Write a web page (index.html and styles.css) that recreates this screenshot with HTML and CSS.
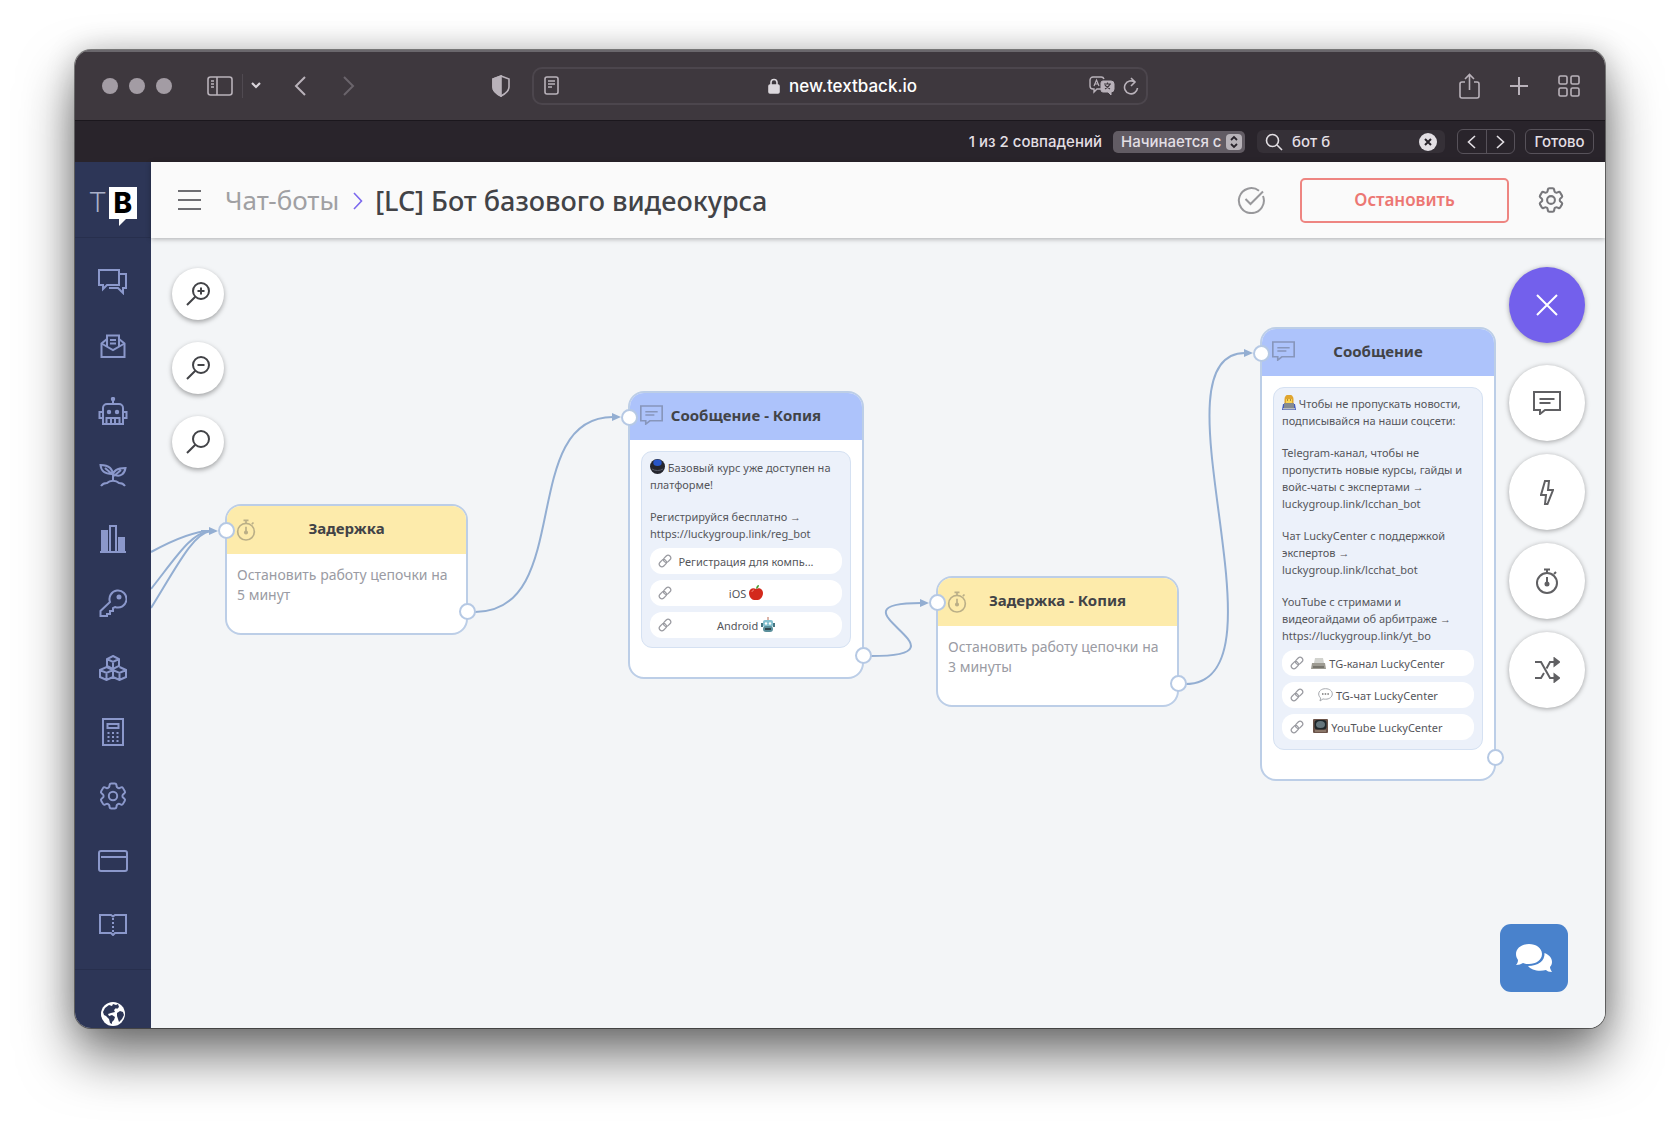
FILE: index.html
```html
<!DOCTYPE html>
<html lang="ru">
<head>
<meta charset="utf-8">
<meta name="viewport" content="width=device-width, initial-scale=1">
<title>[LC] Бот базового видеокурса</title>
<link rel="stylesheet" href="styles.css">
</head>
<body>
<svg class="sprite" aria-hidden="true">
  <symbol id="i-gear" viewBox="2 2 20 20"><path d="M9.594 3.94c.09-.542.56-.94 1.11-.94h2.593c.55 0 1.02.398 1.11.94l.213 1.281c.063.374.313.686.645.87.074.04.147.083.22.127.325.196.72.257 1.075.124l1.217-.456a1.125 1.125 0 0 1 1.37.49l1.296 2.247a1.125 1.125 0 0 1-.26 1.431l-1.003.827c-.293.241-.438.613-.43.992a7.723 7.723 0 0 1 0 .255c-.008.378.137.75.43.991l1.004.827c.424.35.534.955.26 1.43l-1.298 2.247a1.125 1.125 0 0 1-1.369.491l-1.217-.456c-.355-.133-.75-.072-1.076.124a6.47 6.47 0 0 1-.22.128c-.331.183-.581.495-.644.869l-.213 1.281c-.09.543-.56.94-1.11.94h-2.594c-.55 0-1.019-.398-1.11-.94l-.213-1.281c-.062-.374-.312-.686-.644-.87a6.52 6.52 0 0 1-.22-.127c-.325-.196-.72-.257-1.076-.124l-1.217.456a1.125 1.125 0 0 1-1.369-.49l-1.297-2.247a1.125 1.125 0 0 1 .26-1.431l1.004-.827c.292-.24.437-.613.43-.991a6.932 6.932 0 0 1 0-.255c.007-.38-.138-.751-.43-.992l-1.004-.827a1.125 1.125 0 0 1-.26-1.43l1.297-2.247a1.125 1.125 0 0 1 1.37-.491l1.216.456c.356.133.751.072 1.076-.124.072-.044.146-.086.22-.128.332-.183.582-.495.644-.869l.214-1.28Z"/><circle cx="12" cy="12" r="3"/></symbol>
  <symbol id="i-message" viewBox="0 0 28 24"><path d="M1 1h26v18H12l-5 4v-4H1z"/><path d="M6.500 8h15M6.500 12h11"/></symbol>
  <symbol id="i-timer" viewBox="0 0 24 26"><circle cx="12" cy="15" r="10"/><path d="M9 1.500h6M12 1.500V5M19 6l2-2M12 9v6"/><circle class="fill" cx="12" cy="16" r="1.500"/></symbol>
  <symbol id="i-link" viewBox="0 0 16 16"><g transform="rotate(-45 8 8)"><rect x="0" y="5" width="9" height="6" rx="3"/><rect x="7" y="5" width="9" height="6" rx="3"/></g></symbol>
</svg>

<main class="window">
  <div class="toolbar">
    <div class="toolbar-side">
      <div class="lights"><i></i><i></i><i></i></div>
      <button class="plain sidebar-toggle" aria-label="Боковая панель"><svg width="26" height="20" viewBox="0 0 26 20"><rect x="1" y="1" width="24" height="18" rx="2.500"/><path d="M10 1v18M4 5h3M4 8h3M4 11h3"/></svg></button>
      <button class="plain groups" aria-label="Группы вкладок"><svg width="10" height="7" viewBox="0 0 10 7"><path stroke-width="2.200" d="M1 1l4 4 4-4"/></svg></button>
      <button class="plain back" aria-label="Назад"><svg width="12" height="20" viewBox="0 0 12 20"><path stroke-width="2" d="M11 1L2 10l9 9"/></svg></button>
      <button class="plain forward" aria-label="Вперёд" disabled><svg width="12" height="20" viewBox="0 0 12 20"><path stroke-width="2" d="M1 1l9 9-9 9"/></svg></button>
      <button class="plain shield" aria-label="Отчёт о конфиденциальности"><svg width="20" height="22" viewBox="0 0 20 22"><path d="M10 1l8 3v8c0 4-4 7-8 9-4-2-8-5-8-9V4z"/><path class="fill" d="M10 1v20c-4-2-8-5-8-9V4z"/></svg></button>
    </div>
    <div class="address">
      <svg width="15" height="19" viewBox="0 0 15 19"><rect x="1" y="1" width="13" height="17" rx="2"/><path d="M4 5h7M4 8h7M4 11h4" stroke-width="1.300"/></svg>
      <label class="address-field">
        <svg width="12" height="16" viewBox="0 0 12 16" aria-hidden="true"><path d="M3 8V4.500a3 3 0 0 1 6 0V8"/><rect class="fill" x="1" y="7" width="10" height="8" rx="1"/></svg>
        <input type="text" value="new.textback.io" aria-label="Адрес">
      </label>
      <button class="plain" aria-label="Перевести"><svg width="26" height="20" viewBox="0 0 26 20"><path d="M12 13H8l-3 3v-3H4a3 3 0 0 1-3-3V4a3 3 0 0 1 3-3h8a3 3 0 0 1 3 2" stroke-width="1.400"/><path d="M5 10l2.500-6L10 10M6 8h3" stroke-width="1.200"/><path class="fill" d="M14 5h8a3 3 0 0 1 3 3v5a3 3 0 0 1-3 3v3l-3-3h-5a2 2 0 0 1-2-2V7a2 2 0 0 1 2-2z" stroke-width="1"/><path class="cut" d="M15 8h7M18.500 6.500V8M21 8c-1 3-3 4-5 5M16 9c1 2 3 3 5 4"/></svg></button>
      <button class="plain reload" aria-label="Обновить"><svg width="16" height="18" viewBox="0 0 16 18"><path d="M12 5.200A6.500 6.500 0 1 0 14.500 11M8 1l4 4-4 4"/></svg></button>
    </div>
    <div class="toolbar-side toolbar-end">
      <button class="plain" aria-label="Поделиться"><svg width="21" height="26" viewBox="0 0 21 26"><path d="M6 9H3a2 2 0 0 0-2 2v12a2 2 0 0 0 2 2h15a2 2 0 0 0 2-2V11a2 2 0 0 0-2-2h-3M10.500 17V2M6 6l4.500-4.500L15 6"/></svg></button>
      <button class="plain" aria-label="Новая вкладка"><svg width="20" height="20" viewBox="0 0 20 20"><path stroke-width="2" d="M10 1v18M1 10h18"/></svg></button>
      <button class="plain" aria-label="Обзор вкладок"><svg width="22" height="22" viewBox="0 0 22 22"><rect x="1" y="1" width="8" height="8" rx="1.500"/><rect x="13" y="1" width="8" height="8" rx="1.500"/><rect x="1" y="13" width="8" height="8" rx="1.500"/><rect x="13" y="13" width="8" height="8" rx="1.500"/></svg></button>
    </div>
  </div>

  <div class="findbar">
    <span>1 из 2 совпадений</span>
    <label class="match-mode">
      <select aria-label="Режим поиска"><option>Начинается с</option></select>
      <svg width="16" height="16" viewBox="0 0 16 16" aria-hidden="true"><rect width="16" height="16" rx="4"/><path d="M5 6l3-3 3 3M5 10l3 3 3-3"/></svg>
    </label>
    <label class="find-field">
      <svg width="18" height="18" viewBox="0 0 18 18" aria-hidden="true"><circle cx="7.500" cy="7.500" r="6"/><path d="M12 12l5 5"/></svg>
      <input type="text" value="бот б" aria-label="Найти на странице">
      <button class="plain clear" aria-label="Очистить"><svg width="18" height="18" viewBox="0 0 18 18"><circle cx="9" cy="9" r="9"/><path d="M6 6l6 6M12 6l-6 6"/></svg></button>
    </label>
    <div class="stepper">
      <button aria-label="Предыдущее"><svg width="9" height="14" viewBox="0 0 9 14"><path d="M8 1L1.500 7 8 13"/></svg></button>
      <button aria-label="Следующее"><svg width="9" height="14" viewBox="0 0 9 14"><path d="M1 1l6.500 6L1 13"/></svg></button>
    </div>
    <button class="done">Готово</button>
  </div>

  <div class="app">
    <aside class="sidebar">
      <a class="logo" href="#" aria-label="TextBack"><span class="logo-t">T</span><span class="logo-b">B</span></a>
      <nav class="menu">
        <a href="#" aria-label="Диалоги"><svg width="30" height="26" viewBox="0 0 30 26"><path d="M1 1h20v15H9l-4 4v-4H1z"/><path d="M21 5h7v14h-3v5l-5-5h-9"/></svg></a>
        <a href="#" aria-label="Рассылки"><svg width="26" height="24" viewBox="0 0 26 24"><path d="M7 5L1.500 9.500V23h23V9.500L19 5"/><path d="M1.500 9.500L13 16l11.500-6.500M7 12.500V1.500h12v11M10 6h6M10 9.500h6"/></svg></a>
        <a href="#" aria-label="Чат-боты"><svg width="30" height="28" viewBox="0 0 30 28"><path d="M15 7V2M5 27V11a4 4 0 0 1 4-4h12a4 4 0 0 1 4 4v16zM5 15H1.500v6H5M25 15h3.500v6H25M8.500 27v-6h13v6M13 21v6M17 21v6"/><circle class="fill" cx="15" cy="2" r="1.200"/><circle class="fill" cx="11" cy="15" r="1.200"/><circle class="fill" cx="19" cy="15" r="1.200"/></svg></a>
        <a href="#" aria-label="Воронки"><svg width="28" height="24" viewBox="0 0 28 24"><path d="M14 18v-5c0-6-3-11-12.500-11C2 8 6 11 13 11M6 5l7 6M14 13c0-5 4-8 12.500-8-1 6-5 9-10.500 7M22 7l-7 6M2 23c2-3 4-3 6-3 3-3 9-3 12 0 2 0 4 0 6 3"/></svg></a>
        <a href="#" aria-label="Статистика"><svg width="28" height="28" viewBox="0 0 28 28"><path d="M1 27h26M11 27V1h6v26"/><path class="fill" d="M3 6h5v20H3zM20 13h5v13h-5z"/></svg></a>
        <a href="#" aria-label="Доступы"><svg width="28" height="28" viewBox="0 0 28 28"><path d="M11 13a8.500 8.500 0 1 1 5 5l-2 1v3h-3v3H8v2H1.500v-5z"/><circle class="fill" cx="20" cy="8" r="1.500"/></svg></a>
        <a href="#" aria-label="Интеграции"><svg width="28" height="26" viewBox="0 0 28 26"><path d="M14 1l6 3v7l-6 3-6-3V4zM8 4l6 3 6-3M14 7v7M7.500 12l6.500 3v7l-6.500 3-6.500-3v-7zM1 15l6.500 3 6.500-3M7.500 18v7M20.500 12l6.500 3v7l-6.500 3-6.500-3v-7l6.500 3 6.500-3M20.500 18v7"/></svg></a>
        <a href="#" aria-label="Калькулятор"><svg width="22" height="28" viewBox="0 0 22 28"><path d="M1 1h20v26H1zM5.500 6h11v4h-11z"/><path stroke-dasharray="2 2.500" d="M5.500 15h12M5.500 19h12M5.500 23h12"/></svg></a>
        <a href="#" aria-label="Настройки"><svg class="gear" width="28" height="28"><use href="#i-gear"/></svg></a>
        <a href="#" aria-label="Оплата"><svg width="30" height="22" viewBox="0 0 30 22"><rect x="1" y="1" width="28" height="20" rx="2"/><path d="M3 7h26"/></svg></a>
        <a href="#" aria-label="База знаний"><svg width="28" height="22" viewBox="0 0 28 22"><path d="M14 2.500L12 1H1v18h11l2 2 2-2h11V1H16z"/><path stroke-dasharray="2 2" d="M14 4v16"/></svg></a>
      </nav>
      <a class="language" href="#" aria-label="Язык"><svg width="26" height="26" viewBox="0 0 26 26"><circle cx="13" cy="13" r="12"/><path class="land" d="M9 4l3 1 1-2 3 1 2-1 1 3-2 2-1-1-2 2 1 2-4 1-3 1 1 2 3-1 3 2-1 3-2 2v2l-2-1-1-4-3-3-2-1-1-3 2-4zM17 12l3-2 3 1 1 3-2 4-3 3-1-3-1-3z"/></svg></a>
    </aside>

    <section class="page">
      <header class="page-header">
        <button class="plain burger" aria-label="Меню"><svg width="23" height="20" viewBox="0 0 23 20"><path d="M0 1h23M0 10h23M0 19h23"/></svg></button>
        <a class="crumb" href="#">Чат-боты</a>
        <svg class="crumb-sep" width="10" height="18" viewBox="0 0 10 18" aria-hidden="true"><path d="M1 1l7.500 8L1 17"/></svg>
        <h1>[LC] Бот базового видеокурса</h1>
        <svg class="saved" width="28" height="28" viewBox="0 0 28 28" aria-label="Сохранено"><path d="M22 4.700A12.500 12.500 0 1 0 26 10M8.500 13l5 5L26 5.500"/></svg>
        <button class="stop">Остановить</button>
        <button class="plain settings" aria-label="Настройки"><svg width="26" height="26"><use href="#i-gear"/></svg></button>
      </header>

      <div class="canvas">
        <svg class="edges" aria-hidden="true">
          <defs><marker id="arrow" markerUnits="userSpaceOnUse" markerWidth="9" markerHeight="8" refX="1" refY="4" orient="0"><path d="M0 0l9 4-9 4z"/></marker></defs>
          <path d="M0 314C24 301 44 293 59 293"/>
          <path d="M0 351C26 318 40 295 59 293"/>
          <path d="M0 370C26 328 42 296 59 293"/>
          <path marker-end="url(#arrow)" d="M50 293h9"/>
          <path marker-end="url(#arrow)" d="M324 374C424 374 366 179 462 179"/>
          <path marker-end="url(#arrow)" d="M720 418C829 418 669 365 770 365"/>
          <path marker-end="url(#arrow)" d="M1034 446C1144 446 996 115 1094 115"/>
        </svg>

        <article class="node delay" style="left:74px;top:266px">
          <h2><svg width="20" height="22"><use href="#i-timer"/></svg>Задержка</h2>
          <p>Остановить работу цепочки на 5 минут</p>
          <i class="port in"></i><i class="port out"></i>
        </article>

        <article class="node message" style="left:477px;top:153px">
          <h2><svg width="23" height="20"><use href="#i-message"/></svg>Сообщение - Копия</h2>
          <div class="bubble">
            <p><svg class="emoji" width="15" height="15" viewBox="0 0 15 15"><circle cx="7.500" cy="7.500" r="7.500" fill="#25262e"/><ellipse cx="7.500" cy="3.800" rx="4.200" ry="3.300" fill="#2856c8"/><path d="M2 10c3 2 8 2 11 0" stroke="#5b5e6b" fill="none"/></svg> Базовый курс уже доступен на<br>платформе!</p>
            <p>Регистрируйся бесплатно →<br>https://luckygroup.link/reg_bot</p>
            <button><svg width="14" height="14"><use href="#i-link"/></svg><span>Регистрация для компь...</span></button>
            <button><svg width="14" height="14"><use href="#i-link"/></svg><span>iOS <svg class="emoji" width="14" height="15" viewBox="0 0 14 15"><path d="M7 4c3-2 7 0 7 4s-3 7-5 7c-1 0-3 0-4 0-2 0-5-3-5-7s4-6 7-4z" fill="#d3291c"/><path d="M7 4c0-2 1-4 3-4 0 2-1 3-3 4z" fill="#4c9b30"/><path d="M3 7c0-1 1-2 2-2" stroke="#f58c7c" fill="none"/></svg></span></button>
            <button><svg width="14" height="14"><use href="#i-link"/></svg><span>Android <svg class="emoji" width="14" height="15" viewBox="0 0 14 15"><path d="M7 0v3" stroke="#b86a55"/><rect x="2" y="3" width="10" height="7" rx="2" fill="#84c0cf"/><rect x="2" y="9" width="10" height="6" rx="3" fill="#5a8f9b"/><path d="M0 6h2v4H0zM12 6h2v4h-2z" fill="#477682"/><circle cx="5" cy="6.500" r="1.200" fill="#fff"/><circle cx="9" cy="6.500" r="1.200" fill="#fff"/><path d="M4 11h6v2H4z" fill="#31434a"/></svg></span></button>
          </div>
          <i class="port in"></i><i class="port out"></i>
        </article>

        <article class="node delay" style="left:785px;top:338px">
          <h2><svg width="20" height="22"><use href="#i-timer"/></svg>Задержка - Копия</h2>
          <p>Остановить работу цепочки на 3 минуты</p>
          <i class="port in"></i><i class="port out"></i>
        </article>

        <article class="node message" style="left:1109px;top:89px">
          <h2><svg width="23" height="20"><use href="#i-message"/></svg>Сообщение</h2>
          <div class="bubble">
            <p><svg class="emoji" width="14" height="15" viewBox="0 0 14 15"><path d="M2.500 9V4a4 4 0 0 1 9 0v5z" fill="#e0a52f"/><path d="M4 4h6v4H4z" fill="#f9d458"/><path d="M5 5h1M8 5h1" stroke="#6b4a1c"/><path d="M0 15l1-6h12l1 6z" fill="#405ac0"/><path d="M2 8h10v6H2z" fill="#858a90"/><path d="M1 13h12v1.500H1z" fill="#b8bcc0"/></svg> Чтобы не пропускать новости,<br>подписывайся на наши соцсети:</p>
            <p>Telegram-канал, чтобы не<br>пропустить новые курсы, гайды и<br>войс-чаты с экспертами →<br>luckygroup.link/lcchan_bot</p>
            <p>Чат LuckyCenter с поддержкой<br>экспертов →<br>luckygroup.link/lcchat_bot</p>
            <p>YouTube с стримами и<br>видеогайдами об арбитраже →<br>https://luckygroup.link/yt_bo</p>
            <button><svg width="14" height="14"><use href="#i-link"/></svg><span><svg class="emoji" width="15" height="13" viewBox="0 0 15 13"><path d="M4 1h8l1 5H3z" fill="#d2d3cf"/><path d="M1 6h13l1 6H0z" fill="#9d9b92"/><path d="M2 9h11v2H2z" fill="#77756d"/></svg> TG-канал LuckyCenter</span></button>
            <button><svg width="14" height="14"><use href="#i-link"/></svg><span><svg class="emoji" width="15" height="14" viewBox="0 0 15 14"><path d="M7.500.7c4 0 6.800 2.200 6.800 5.200s-2.800 5.300-6.800 5.300c-1 0-1.500 0-2.500-.3L2 13l.7-3C1.500 9 .7 7.700.7 6 .7 3 3.500.7 7.500.7z" fill="#fff" stroke="#a6a9ae"/><path d="M4 6h7" stroke="#777" stroke-width="1.500" stroke-dasharray="1.500 1.200"/></svg> TG-чат LuckyCenter</span></button>
            <button><svg width="14" height="14"><use href="#i-link"/></svg><span><svg class="emoji" width="15" height="15" viewBox="0 0 15 15"><rect width="15" height="14" rx="1" fill="#6b544a"/><rect x="1.500" y="1" width="12" height="9.500" rx="3" fill="#1d2529"/><ellipse cx="7.500" cy="5.500" rx="4.500" ry="3.500" fill="#64757c"/><path d="M2 12h11" stroke="#aa9988"/></svg> YouTube LuckyCenter</span></button>
          </div>
          <i class="port in"></i><i class="port out"></i>
        </article>

        <div class="zoom">
          <button aria-label="Увеличить"><svg width="24" height="24" viewBox="0 0 24 24"><circle cx="15" cy="9" r="8"/><path d="M9.300 14.700L1 23M15 5.500v7M11.500 9h7"/></svg></button>
          <button aria-label="Уменьшить"><svg width="24" height="24" viewBox="0 0 24 24"><circle cx="15" cy="9" r="8"/><path d="M9.300 14.700L1 23M11.500 9h7"/></svg></button>
          <button aria-label="Сбросить масштаб"><svg width="24" height="24" viewBox="0 0 24 24"><circle cx="15" cy="9" r="8"/><path d="M9.300 14.700L1 23"/></svg></button>
        </div>

        <div class="actions">
          <button class="close" aria-label="Закрыть"><svg width="22" height="22" viewBox="0 0 22 22"><path d="M1 1l20 20M21 1L1 21"/></svg></button>
          <button aria-label="Сообщение"><svg width="28" height="24"><use href="#i-message"/></svg></button>
          <button aria-label="Действие"><svg width="14" height="25" viewBox="0 0 14 25"><path d="M5 1h4l-1 9h5L7.500 24H5l1-9H1z"/></svg></button>
          <button aria-label="Задержка"><svg width="24" height="26"><use href="#i-timer"/></svg></button>
          <button aria-label="Распределение"><svg width="26" height="26" viewBox="0 0 26 26"><path d="M1 5h6l9 16h5M1 21h6l3-5M12.500 11.500L16 5h5"/><path class="fill" d="M20.500 1.500L25 5l-4.500 3.500zM20.500 17.500L25 21l-4.500 3.500z"/></svg></button>
        </div>

        <button class="support" aria-label="Чат поддержки"><svg width="38" height="30" viewBox="0 0 38 30"><path d="M14 1c7 0 13 4 13 10s-6 10-13 10c-2 0-4 0-6-1-2 1-4 2-7 2 1-1 2-3 2-5-1-2-2-3-2-6C1 5 7 1 14 1z"/><path d="M29.500 10c5 2 7.500 5 7.500 9 0 2-1 4-2 5 0 2 1 3 2 5-3 0-5-1-6-2-7 2-15 0-18-4 10 0 17-5 16.500-13z"/></svg></button>
      </div>
    </section>
  </div>
</main>
</body>
</html>
```
FILE: styles.css
```css
* { box-sizing: border-box; }

body {
  display: flex;
  height: 100vh;
  min-height: 600px;
  margin: 0;
  padding: 50px 75px 100px;
  overflow: hidden;
  background: #fff;
  color: #424347;
  font-family: "Noto Sans", "Open Sans", sans-serif;
}

h1, h2, p { margin: 0; }
a { text-decoration: none; }
button, input, select { font: inherit; color: inherit; }
button { display: flex; align-items: center; justify-content: center; padding: 0; border: 0; background: none; cursor: pointer; }
input { min-width: 0; padding: 0; border: 0; background: none; outline: 0; }
svg { flex: none; fill: none; stroke: currentColor; stroke-width: 1.6; }
svg .fill { fill: currentColor; }
.sprite { position: absolute; width: 0; height: 0; }

.window {
  display: flex;
  flex: 1;
  flex-direction: column;
  min-width: 0;
  overflow: hidden;
  border-radius: 16px;
  box-shadow: 0 0 0 1px rgba(0, 0, 0, .45), 0 28px 54px rgba(0, 0, 0, .55), 0 0 30px rgba(0, 0, 0, .2);
}

/* Browser toolbar */
.toolbar {
  display: grid;
  flex: none;
  grid-template-columns: 1fr 616px 1fr;
  align-items: center;
  height: 71px;
  padding-bottom: 1px;
  border-top: 2px solid #6a676c;
  border-bottom: 1px solid #1b171d;
  background: #3e383e;
  color: #b9b2ba;
  font-family: Inter, sans-serif;
}
.toolbar-side { display: flex; align-items: center; padding: 0 21px 0 27px; }
.toolbar-end { justify-content: flex-end; gap: 29px; padding-right: 25px; }
.lights { display: flex; gap: 11px; margin-right: 35px; }
.lights i { width: 16px; height: 16px; border-radius: 50%; background: #a39ca4; }
.sidebar-toggle { margin-right: 9px; }
.groups { height: 24px; margin-right: 33px; padding-left: 8px; border-left: 1px solid #504a51; color: #d9d4da; }
.back { margin-right: 37px; }
.forward { color: #6a646b; }
.shield { margin-left: auto; }
.address {
  display: flex;
  align-items: center;
  height: 38px;
  padding: 0 7px 0 10px;
  border: 2px solid #4c464d;
  border-radius: 10px;
}
.address-field { display: flex; flex: 1; align-items: center; justify-content: center; gap: 9px; padding-left: 38px; color: #dcd8dd; }
.address-field input { width: 129px; color: #fff; font-size: 17px; font-weight: 500; }
.cut { stroke: #3e383e; stroke-width: 1.2; }
.reload { margin-left: 8px; }

.findbar {
  display: flex;
  flex: none;
  align-items: center;
  justify-content: flex-end;
  height: 41px;
  padding: 0 11px;
  background: #29242b;
  color: #e3dfe4;
  font: 500 15px/22px Inter, sans-serif;
}
.match-mode { display: flex; align-items: center; width: 132px; height: 22px; margin: 0 12px 0 11px; padding-right: 3px; border-radius: 5px; background: #625c64; }
.match-mode select { flex: 1; height: 22px; min-width: 0; padding: 0 0 0 8px; border: 0; appearance: none; background: none; }
.match-mode svg { stroke: #29242b; stroke-width: 1.8; }
.match-mode rect { fill: #b7b2b8; stroke: none; }
.find-field { display: flex; align-items: center; gap: 9px; width: 188px; height: 23px; margin-right: 12px; padding: 0 8px; border-radius: 6px; background: #353037; }
.find-field input { flex: 1; }
.clear circle { fill: #e3dfe4; stroke: none; }
.clear path { stroke: #29242b; stroke-width: 2; }
.stepper { display: flex; width: 58px; height: 25px; margin-right: 10px; border: 1px solid #57525a; border-radius: 6px; }
.stepper button { flex: 1; }
.stepper button + button { border-left: 1px solid #57525a; }
.done { width: 69px; height: 25px; border: 1px solid #57525a; border-radius: 6px; }

/* Application */
.app { display: flex; flex: 1; min-height: 0; }
.sidebar { display: flex; flex: none; flex-direction: column; width: 76px; background: #2d3657; color: #8b98cb; }
.sidebar svg { stroke-width: 2; }
.sidebar .gear { stroke-width: 1.4; }
.logo { display: flex; flex: none; align-items: center; justify-content: center; gap: 3px; height: 76px; padding-top: 6px; border-bottom: 1px solid #272f4d; }
.logo-t { color: #a9b0c9; font: 300 28px/30px Roboto, sans-serif; }
.logo-b { position: relative; width: 28px; height: 32px; background: #fff; color: #000; font: 800 28px/32px Inter, sans-serif; text-align: center; }
.logo-b::after { content: ""; position: absolute; top: 31px; left: 10px; border: 4px solid transparent; border-top-color: #fff; border-left-color: #fff; }
.menu { display: flex; flex: 1; flex-direction: column; min-height: 0; padding: 12px 0; }
.menu a { display: flex; flex: 1; align-items: center; justify-content: center; color: inherit; }
.language { display: flex; flex: none; align-items: center; justify-content: center; height: 59px; padding-top: 29px; border-top: 1px solid #272f4d; }
.language circle { fill: #fff; stroke: none; }
.language .land { fill: #2d3657; stroke: none; }

.page { display: flex; flex: 1; flex-direction: column; min-width: 0; }
.page-header {
  z-index: 1;
  display: flex;
  flex: none;
  align-items: center;
  height: 76px;
  padding: 0 41px 0 27px;
  background: #fafafa;
  box-shadow: 0 1px 5px rgba(0, 0, 0, .3);
}
.burger { margin-right: 24px; color: #6e6e72; }
.burger svg { stroke-width: 2; }
.crumb { color: #a0a0a3; font-size: 26px; }
.crumb-sep { margin: 2px 12px 0 14px; color: #7b68ee; }
h1 { font-size: 27px; font-weight: 500; white-space: nowrap; }
.saved { margin-left: auto; color: #98989b; stroke-width: 2; }
.stop { width: 209px; height: 45px; margin: 0 29px 0 35px; padding-bottom: 1px; border: 2px solid #ee8581; border-radius: 5px; color: #ec7773; font-size: 17px; font-weight: 600; }
.settings { color: #77777b; }

/* Flow canvas */
.canvas { position: relative; flex: 1; overflow: hidden; background: #f3f5f7; }
.edges { position: absolute; width: 100%; height: 100%; color: #93aed2; stroke-width: 2; }
.edges marker path { fill: #93aed2; stroke: none; }

.node { position: absolute; border: 2px solid #bccee7; border-radius: 16px; background: #fff; }
.node h2 { position: relative; display: flex; align-items: center; justify-content: center; height: 48px; padding-bottom: 4px; border-radius: 14px 14px 0 0; font-size: 15px; font-weight: 700; }
.node h2 svg { position: absolute; top: 13px; left: 9px; opacity: .35; stroke-width: 2; }
.delay { width: 243px; height: 131px; }
.delay h2 { background: #fdebab; }
.delay p { padding: 11px 10px; color: #9a9ba3; font-size: 14px; line-height: 20px; }
.message { width: 236px; padding-bottom: 29px; }
.message h2 { height: 47px; background: #adc3fb; }
.message h2 svg { top: 12px; left: 10px; }
.port { position: absolute; width: 17px; height: 17px; border: 2px solid #b6c9e4; border-radius: 50%; background: #fff; }
.in { top: 16px; left: -9px; }
.out { right: -10px; bottom: 13px; }

.bubble { display: flex; flex-direction: column; gap: 6px; margin: 11px 11px 0; padding: 7px 8px 9px; border: 1px solid #d5e1f2; border-radius: 11px; background: #ecf1fa; color: #55565b; font-size: 11px; line-height: 17px; white-space: nowrap; }
.bubble p + p { margin-top: 9px; }
.bubble .emoji { vertical-align: -2px; stroke-width: 1; stroke: none; }
.bubble button { height: 26px; padding: 0 8px; border-radius: 12px; background: #fff; }
.bubble button > svg { color: #999aa0; stroke-width: 1.4; }
.bubble button span { flex: 1; padding-right: 14px; text-align: center; }

/* Floating controls */
.zoom { position: absolute; top: 30px; left: 21px; display: flex; flex-direction: column; gap: 22px; }
.zoom button { width: 52px; height: 52px; border-radius: 50%; background: #fff; box-shadow: 0 2px 5px rgba(0, 0, 0, .35); }
.zoom svg { stroke-width: 2; }
.actions { position: absolute; top: 29px; right: 20px; display: flex; flex-direction: column; gap: 13px; }
.actions button { width: 76px; height: 76px; border-radius: 50%; background: #fff; color: #606063; box-shadow: 0 1px 5px rgba(0, 0, 0, .35); }
.actions svg { stroke-width: 2; }
.actions .close { margin-bottom: 9px; background: #7360ec; color: #fff; }
.support { position: absolute; right: 37px; bottom: 36px; width: 68px; height: 68px; border-radius: 11px; background: #4982cc; }
.support path { fill: #fff; stroke: none; }
```
